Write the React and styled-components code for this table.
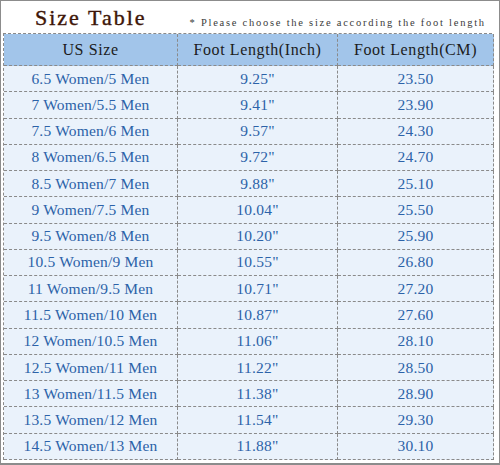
import React from 'react';
import styled, { createGlobalStyle } from 'styled-components';

const GlobalStyle = createGlobalStyle`
  html, body {
    margin: 0;
    padding: 0;
    background: #fff;
  }
`;

const Frame = styled.div`
  width: 500px;
  height: 465px;
  box-sizing: border-box;
  border: 1px solid #8c8c8c;
  border-bottom-width: 2px;
  background: #fff;
  font-family: "Liberation Serif", "Times New Roman", serif;
  padding: 0 7px 0 2px;
`;

const TitleRow = styled.div`
  height: 32px;
  display: flex;
  align-items: flex-end;
`;

const Title = styled.h1`
  margin: 0 0 1px 32px;
  font-size: 22px;
  font-weight: normal;
  color: #3e1608;
  line-height: 28px;
  letter-spacing: 2px;
  -webkit-text-stroke: 0.4px #3e1608;
`;

const Note = styled.span`
  margin: 0 0 5px 43px;
  font-size: 10.5px;
  color: #3a3a3a;
  letter-spacing: 1.75px;
  white-space: nowrap;
`;

const Grid = styled.div`
  display: grid;
  grid-template-columns: 174px 160px 156px;
  border: 1px dashed #8a8a8a;
  border-right: none;
  border-bottom: none;
`;

const Cell = styled.div`
  height: ${p => (p.$head ? 31 : 25.27)}px;
  display: flex;
  align-items: center;
  justify-content: center;
  border-right: 1px dashed #8a8a8a;
  border-bottom: 1px dashed #8a8a8a;
  background: ${p => (p.$head ? '#a2c5ea' : '#eaf2fb')};
  color: ${p => (p.$head ? '#1c1c1c' : '#2c62a8')};
  font-size: ${p => (p.$head ? 16 : 15.5)}px;
  letter-spacing: ${p => (p.$head ? 0.6 : 0.2)}px;
  white-space: nowrap;
`;

const rows = [
  ['6.5 Women/5 Men', '9.25"', '23.50'],
  ['7 Women/5.5 Men', '9.41"', '23.90'],
  ['7.5 Women/6 Men', '9.57"', '24.30'],
  ['8 Women/6.5 Men', '9.72"', '24.70'],
  ['8.5 Women/7 Men', '9.88"', '25.10'],
  ['9 Women/7.5 Men', '10.04"', '25.50'],
  ['9.5 Women/8 Men', '10.20"', '25.90'],
  ['10.5 Women/9 Men', '10.55"', '26.80'],
  ['11 Women/9.5 Men', '10.71"', '27.20'],
  ['11.5 Women/10 Men', '10.87"', '27.60'],
  ['12 Women/10.5 Men', '11.06"', '28.10'],
  ['12.5 Women/11 Men', '11.22"', '28.50'],
  ['13 Women/11.5 Men', '11.38"', '28.90'],
  ['13.5 Women/12 Men', '11.54"', '29.30'],
  ['14.5 Women/13 Men', '11.88"', '30.10'],
];

export default function App() {
  return (
    <>
      <GlobalStyle />
      <Frame>
        <TitleRow>
          <Title>Size Table</Title>
          <Note>* Please choose the size according the foot length</Note>
        </TitleRow>
        <Grid>
          <Cell $head>US Size</Cell>
          <Cell $head>Foot Length(Inch)</Cell>
          <Cell $head>Foot Length(CM)</Cell>
          {rows.map(r => r.map((v, i) => <Cell key={r[0] + i}>{v}</Cell>))}
        </Grid>
      </Frame>
    </>
  );
}
